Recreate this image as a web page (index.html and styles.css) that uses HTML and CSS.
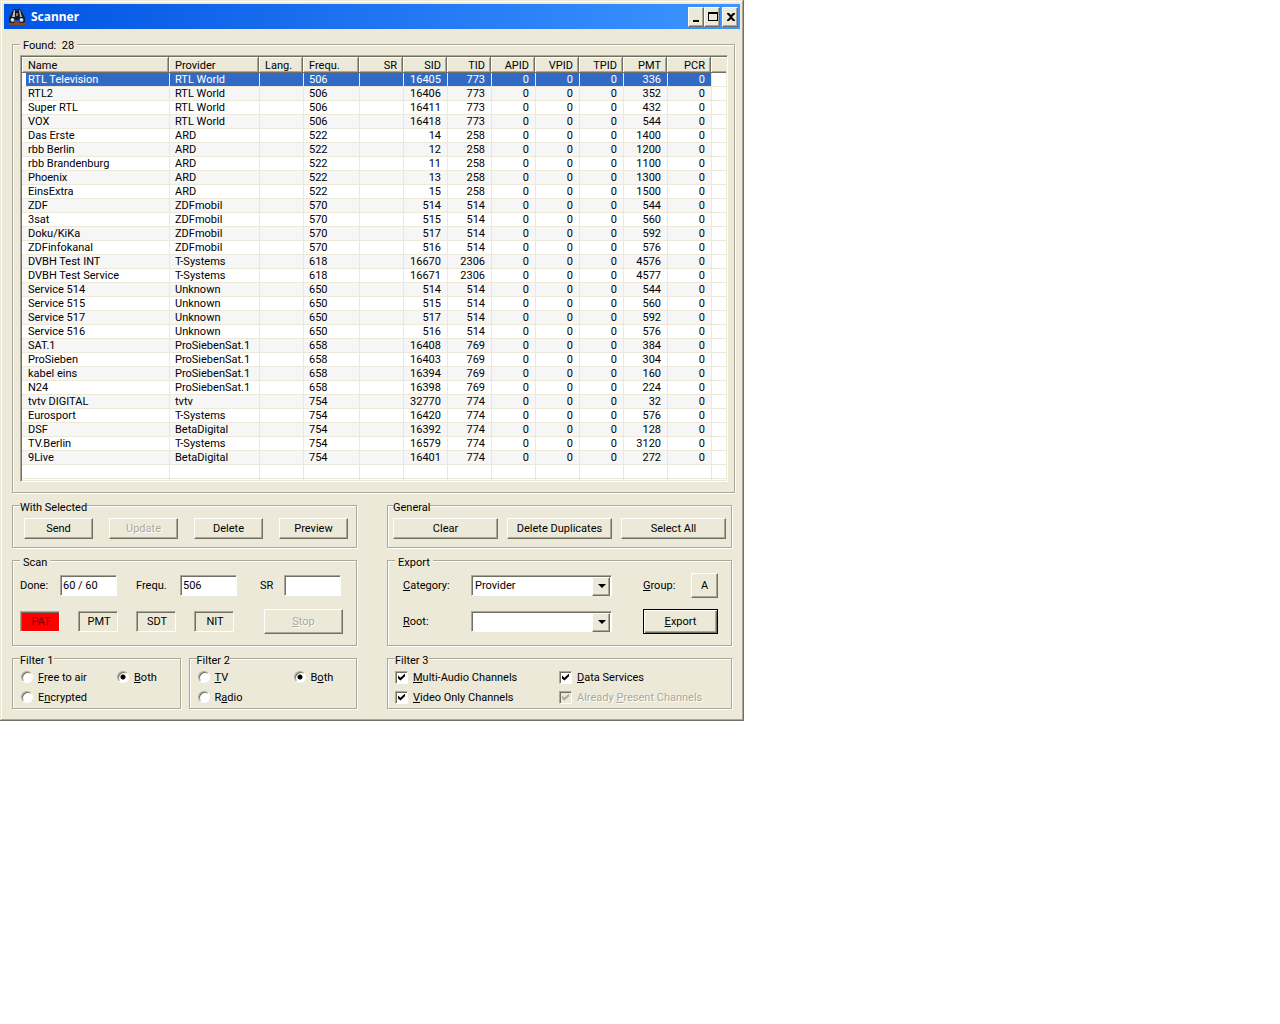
FILE: index.html
```html
<!DOCTYPE html>
<html lang="en">
<head>
    <meta charset="UTF-8">
    <meta name="viewport" content="width=device-width, initial-scale=1.0">
    <title>Scanner</title>
    <link rel="stylesheet" href="styles.css">
</head>
<body>
    <main class="window">
        <header class="title-bar">
            <svg class="title-icon" viewBox="0 0 16 16" aria-hidden="true">
                <path d="M1 13h15v3H0v-2z" fill="#8a4a20"/>
                <path d="M5 0h2l1 2 1-2h2l2 3 3 6v4l-2 1h-3l-1-3H6l-1 3H2l-2-1V9l3-6z" fill="#18181c"/>
                <path d="M5 1h1v7H3zM10 1h1l2 7h-2z" fill="#b8b8b8"/>
                <path d="M7 4h2v3H7z" fill="#77777c"/>
                <circle cx="3.500" cy="11" r="2" fill="#a9cff2"/>
                <circle cx="12.500" cy="11" r="2" fill="#a9cff2"/>
                <path d="M2 10h2v1H2zM11 10h2v1h-2z" fill="#fff"/>
            </svg>
            <h1>Scanner</h1>
            <button class="title-btn" type="button" aria-label="Minimize">
                <svg viewBox="0 0 12 12"><path d="M2 9h6v2H2z"/></svg>
            </button>
            <button class="title-btn" type="button" aria-label="Maximize">
                <svg viewBox="0 0 12 12"><path d="M1 1h10v9H1zM2 3v6h8V3z" fill-rule="evenodd"/></svg>
            </button>
            <button class="title-btn close" type="button" aria-label="Close">
                <svg viewBox="0 0 12 12"><path d="M2 2h2l2 2 2-2h2v1L7 6l3 3v1H8L6 8l-2 2H2V9l3-3-3-3z"/></svg>
            </button>
        </header>

        <form class="dialog" onsubmit="return false">
            <fieldset class="found">
                <legend>Found:&nbsp; 28</legend>
                <div class="list">
                    <table>
                        <colgroup>
                            <col class="col-name">
                            <col class="col-provider">
                            <col class="col-small">
                            <col class="col-frequ">
                            <col class="col-small" span="8">
                            <col class="col-rest">
                        </colgroup>
                        <thead>
                            <tr>
                                <th>Name</th>
                                <th>Provider</th>
                                <th>Lang.</th>
                                <th>Frequ.</th>
                                <th class="num">SR</th>
                                <th class="num">SID</th>
                                <th class="num">TID</th>
                                <th class="num">APID</th>
                                <th class="num">VPID</th>
                                <th class="num">TPID</th>
                                <th class="num">PMT</th>
                                <th class="num">PCR</th>
                                <td></td>
                            </tr>
                        </thead>
                        <tbody id="channels"></tbody>
                    </table>
                </div>
            </fieldset>

            <div class="panels">
                <fieldset class="actions">
                    <legend>With Selected</legend>
                    <div class="button-row">
                        <button type="button">Send</button>
                        <button type="button" disabled>Update</button>
                        <button type="button">Delete</button>
                        <button type="button">Preview</button>
                    </div>
                </fieldset>

                <fieldset class="actions general">
                    <legend>General</legend>
                    <div class="button-row">
                        <button type="button">Clear</button>
                        <button type="button">Delete Duplicates</button>
                        <button type="button">Select All</button>
                    </div>
                </fieldset>

                <fieldset class="settings">
                    <legend class="spaced">Scan</legend>
                    <div class="scan-fields">
                        <label for="done">Done:</label>
                        <input type="text" id="done" value="60 / 60">
                        <label for="frequ">Frequ.</label>
                        <input type="text" id="frequ" value="506">
                        <label for="sr">SR</label>
                        <input type="text" id="sr">
                    </div>
                    <div class="scan-status">
                        <span class="lamp on">PAT</span>
                        <span class="lamp">PMT</span>
                        <span class="lamp">SDT</span>
                        <span class="lamp">NIT</span>
                        <button type="button" disabled><u>S</u>top</button>
                    </div>
                </fieldset>

                <fieldset class="settings">
                    <legend class="spaced">Export</legend>
                    <div class="export-row">
                        <label for="category"><u>C</u>ategory:</label>
                        <span class="combo">
                            <select id="category">
                                <option>Provider</option>
                            </select>
                        </span>
                        <div class="export-end">
                            <label for="group"><u>G</u>roup:</label>
                            <button class="group-btn" type="button" id="group">A</button>
                        </div>
                    </div>
                    <div class="export-row">
                        <label for="root"><u>R</u>oot:</label>
                        <span class="combo">
                            <select id="root">
                                <option></option>
                            </select>
                        </span>
                        <div class="export-end">
                            <button class="default" type="submit"><u>E</u>xport</button>
                        </div>
                    </div>
                </fieldset>

                <div class="radio-groups">
                    <fieldset class="filter">
                        <legend>Filter 1</legend>
                        <div class="options">
                            <label><input type="radio" name="filter1"><span><u>F</u>ree to air</span></label>
                            <label><input type="radio" name="filter1" checked><span><u>B</u>oth</span></label>
                            <label><input type="radio" name="filter1"><span>E<u>n</u>crypted</span></label>
                        </div>
                    </fieldset>
                    <fieldset class="filter">
                        <legend>Filter 2</legend>
                        <div class="options">
                            <label><input type="radio" name="filter2"><span><u>T</u>V</span></label>
                            <label><input type="radio" name="filter2" checked><span>B<u>o</u>th</span></label>
                            <label><input type="radio" name="filter2"><span>R<u>a</u>dio</span></label>
                        </div>
                    </fieldset>
                </div>

                <fieldset class="filter">
                    <legend>Filter 3</legend>
                    <div class="options checks">
                        <label><input type="checkbox" checked><span><u>M</u>ulti-Audio Channels</span></label>
                        <label><input type="checkbox" checked><span><u>D</u>ata Services</span></label>
                        <label><input type="checkbox" checked><span><u>V</u>ideo Only Channels</span></label>
                        <label class="disabled"><input type="checkbox" checked disabled><span>Already <u>P</u>resent Channels</span></label>
                    </div>
                </fieldset>
            </div>
        </form>
    </main>

    <script>
        // name, provider, frequency, SID, TID, PMT
        const channels = [
            ['RTL Television', 'RTL World', 506, 16405, 773, 336],
            ['RTL2', 'RTL World', 506, 16406, 773, 352],
            ['Super RTL', 'RTL World', 506, 16411, 773, 432],
            ['VOX', 'RTL World', 506, 16418, 773, 544],
            ['Das Erste', 'ARD', 522, 14, 258, 1400],
            ['rbb Berlin', 'ARD', 522, 12, 258, 1200],
            ['rbb Brandenburg', 'ARD', 522, 11, 258, 1100],
            ['Phoenix', 'ARD', 522, 13, 258, 1300],
            ['EinsExtra', 'ARD', 522, 15, 258, 1500],
            ['ZDF', 'ZDFmobil', 570, 514, 514, 544],
            ['3sat', 'ZDFmobil', 570, 515, 514, 560],
            ['Doku/KiKa', 'ZDFmobil', 570, 517, 514, 592],
            ['ZDFinfokanal', 'ZDFmobil', 570, 516, 514, 576],
            ['DVBH Test INT', 'T-Systems', 618, 16670, 2306, 4576],
            ['DVBH Test Service', 'T-Systems', 618, 16671, 2306, 4577],
            ['Service 514', 'Unknown', 650, 514, 514, 544],
            ['Service 515', 'Unknown', 650, 515, 514, 560],
            ['Service 517', 'Unknown', 650, 517, 514, 592],
            ['Service 516', 'Unknown', 650, 516, 514, 576],
            ['SAT.1', 'ProSiebenSat.1', 658, 16408, 769, 384],
            ['ProSieben', 'ProSiebenSat.1', 658, 16403, 769, 304],
            ['kabel eins', 'ProSiebenSat.1', 658, 16394, 769, 160],
            ['N24', 'ProSiebenSat.1', 658, 16398, 769, 224],
            ['tvtv DIGITAL', 'tvtv', 754, 32770, 774, 32],
            ['Eurosport', 'T-Systems', 754, 16420, 774, 576],
            ['DSF', 'BetaDigital', 754, 16392, 774, 128],
            ['TV.Berlin', 'T-Systems', 754, 16579, 774, 3120],
            ['9Live', 'BetaDigital', 754, 16401, 774, 272]
        ];

        const rows = channels.map(([name, provider, frequ, sid, tid, pmt], i) => `
            <tr${i === 0 ? ' class="selected"' : ''}>
                <td>${name}</td><td>${provider}</td><td></td><td>${frequ}</td><td></td>
                ${[sid, tid, 0, 0, 0, pmt, 0].map(n => `<td class="num">${n}</td>`).join('')}
                <td></td>
            </tr>`);

        // Empty rows carry the grid lines to the bottom of the list
        const empty = '<td></td>'.repeat(13);
        rows.push(`<tr>${empty}</tr>`, `<tr class="tail">${empty}</tr>`);
        document.getElementById('channels').innerHTML = rows.join('');
    </script>
</body>
</html>
```
FILE: styles.css
```css
* {
    box-sizing: border-box;
}

body {
    margin: 0;
    background: #fff;
    color: #000;
    font: 11px/13px Roboto, "Liberation Sans", sans-serif;
}

button,
input,
select {
    margin: 0;
    font: inherit;
    color: inherit;
}

.window {
    max-width: 744px;
    padding: 4px;
    background: #ece9d8;
    box-shadow: inset -1px -1px #716f64, inset 1px 1px #ece9d8,
        inset -2px -2px #aca899, inset 2px 2px #fff;
}

/* Title bar */
.title-bar {
    display: flex;
    align-items: center;
    height: 25px;
    padding: 0 2px 0 5px;
    background: linear-gradient(to right, #0054e3, #3d95ff);
}

.title-icon {
    width: 16px;
    height: 16px;
}

.title-bar h1 {
    flex: 1;
    margin: 0 0 0 6px;
    color: #fff;
    font: bold 12px/16px "Noto Sans", sans-serif;
}

.title-btn {
    width: 16px;
    height: 20px;
    padding: 2px;
}

.title-btn svg {
    display: block;
    width: 12px;
    height: 12px;
}

.title-btn.close {
    margin-left: 2px;
}

/* Group boxes */
.dialog {
    padding: 8px 5px 8px 8px;
}

fieldset {
    min-width: 0;
    margin: 0;
    border: 1px solid #aca899;
    box-shadow: 1px 1px #fff, inset 1px 1px #fff;
}

legend {
    padding: 4px 0 0;
    background: #ece9d8;
}

legend.spaced {
    padding: 4px 3px 0;
}

.found legend {
    padding: 2px 3px 0;
}

.found {
    padding: 3px 6px 10px 7px;
}

.panels {
    display: grid;
    grid-template-columns: 1fr 1fr;
    gap: 4px 30px;
    margin: 4px 3px 0 0;
}

.actions {
    padding: 4px 8px 8px 7px;
}

.general {
    padding: 4px 5px 8px;
}

.settings {
    padding: 4px 13px 11px 7px;
}

.radio-groups {
    display: grid;
    grid-template-columns: 1fr 1fr;
    gap: 8px;
}

.filter {
    padding: 0 7px 1px;
}

/* Channel list */
.list {
    padding: 1px;
    border: 1px solid;
    border-color: #aca899 #fff #fff #aca899;
    background: #fff;
    box-shadow: inset 1px 1px #716f64, inset -1px -1px #ece9d8;
}

table {
    width: 100%;
    table-layout: fixed;
    border-collapse: separate;
    border-spacing: 0;
}

.col-name {
    width: 147px;
}

.col-provider {
    width: 90px;
}

.col-small {
    width: 44px;
}

.col-frequ {
    width: 56px;
}

.col-rest {
    width: 15px;
}

th {
    font-weight: normal;
    text-align: left;
}

td {
    height: 14px;
    padding: 1px 6px 0 5px;
    border-bottom: 1px solid #ece9d8;
    border-left: 1px solid #ece9d8;
    line-height: 12px;
    white-space: nowrap;
}

td:first-child {
    border-left: 0;
    padding-left: 6px;
}

thead th,
thead td {
    height: 16px;
    padding: 0 6px;
    border: 0;
    background: #ece9d8;
    box-shadow: inset -1px -1px #716f64, inset 1px 1px #fff, inset -2px -2px #aca899;
}

thead td {
    box-shadow: inset 0 -1px #716f64, inset 1px 1px #fff, inset 0 -2px #aca899;
}

tbody tr:nth-child(even) {
    background: #f6f6f6;
}

tbody td:last-child {
    background: #fff;
}

th.num,
td.num {
    text-align: right;
}

.selected td {
    background: #316ac5;
    color: #fff;
}

.selected td:first-child {
    background: linear-gradient(to right, #fff 4px, #316ac5 4px);
}

.tail td {
    height: 1px;
    padding: 0;
    border-bottom: 0;
    background: #fff;
}

/* Buttons */
button {
    padding: 0;
    border: 1px solid;
    border-color: #fff #716f64 #716f64 #fff;
    border-radius: 0;
    background: #ece9d8;
    box-shadow: inset -1px -1px #aca899;
}

button:disabled {
    color: #aca899;
    text-shadow: 1px 1px #fff;
}

.button-row {
    display: flex;
    justify-content: space-between;
    padding-left: 4px;
}

.button-row button {
    width: 69px;
    height: 21px;
}

.general .button-row {
    padding-left: 0;
}

.general button {
    width: 105px;
}

/* Scan */
.scan-fields,
.scan-status,
.export-row {
    display: flex;
    align-items: center;
    height: 25px;
}

.scan-status,
.export-row + .export-row {
    margin-top: 11px;
}

.scan-fields label {
    width: 40px;
}

.scan-fields input + label {
    width: 44px;
    margin-left: 19px;
}

.scan-fields input + label:last-of-type {
    width: 24px;
    margin-left: 23px;
}

.scan-fields input,
.lamp,
select {
    height: 21px;
    border: 1px solid;
    border-color: #aca899 #fff #fff #aca899;
    border-radius: 0;
    box-shadow: inset 1px 1px #716f64;
}

.scan-fields input {
    width: 57px;
    padding: 0 2px;
    background: #fff;
}

.lamp {
    width: 40px;
    margin-right: 18px;
    padding-left: 2px;
    line-height: 19px;
    text-align: center;
}

.lamp.on {
    background: #f00;
    color: #700;
}

.scan-status button {
    width: 79px;
    height: 25px;
    margin-left: auto;
}

/* Export */
.export-row {
    padding-left: 8px;
}

.export-row > label {
    width: 68px;
}

.combo {
    position: relative;
    width: 141px;
}

select {
    display: block;
    width: 100%;
    padding: 0 20px 0 3px;
    background: #fff;
    appearance: none;
}

.combo::before {
    content: "";
    position: absolute;
    top: 2px;
    right: 2px;
    width: 16px;
    height: 17px;
    border: 1px solid;
    border-color: #fff #716f64 #716f64 #fff;
    background: #ece9d8;
    box-shadow: inset -1px -1px #aca899;
    pointer-events: none;
}

.combo::after {
    content: "";
    position: absolute;
    top: 9px;
    right: 6px;
    border: 4px solid transparent;
    border-top-color: #000;
    border-bottom: 0;
    pointer-events: none;
}

.export-end {
    display: flex;
    align-items: center;
    justify-content: space-between;
    width: 75px;
    margin-left: auto;
}

.export-end button {
    height: 25px;
}

.group-btn {
    width: 27px;
}

.default {
    width: 75px;
    border-color: #000;
    box-shadow: inset 1px 1px #fff, inset -1px -1px #716f64, inset -2px -2px #aca899;
}

/* Filters */
.options {
    display: grid;
    grid-template-columns: 96px 1fr;
    grid-auto-rows: 20px;
}

.options label {
    display: flex;
    align-items: center;
    white-space: nowrap;
}

.options.checks {
    grid-template-columns: 164px 1fr;
}

.options input {
    flex: none;
    width: 12px;
    height: 12px;
    margin: 0 5px 0 1px;
    border: 1px solid;
    border-color: #aca899 #fff #fff #aca899;
    background: #fff;
    box-shadow: inset 1px 1px #716f64;
    appearance: none;
}

input[type="radio"] {
    border-radius: 50%;
}

.options input[type="radio"]:checked {
    background: radial-gradient(circle, #000 2px, #fff 3px);
}

.options input[type="checkbox"] {
    display: grid;
    place-items: center;
    width: 13px;
    height: 13px;
    margin: 0 5px 0 0;
}

input[type="checkbox"]:checked::before {
    content: "";
    width: 7px;
    height: 7px;
    background: #000;
    clip-path: polygon(0 30%, 35% 60%, 100% 0, 100% 40%, 35% 100%, 0 70%);
}

.options input:disabled {
    background: #ece9d8;
}

.options input:disabled::before {
    background: #aca899;
}

.disabled {
    color: #aca899;
    text-shadow: 1px 1px #fff;
}
```
